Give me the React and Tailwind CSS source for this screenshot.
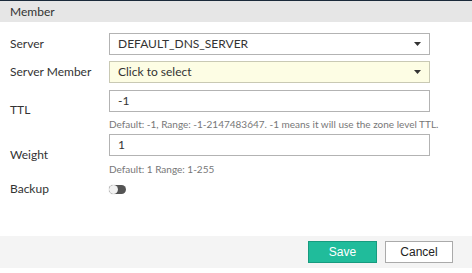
import React from "react";

function Caret() {
  return (
    <svg width="7" height="4" viewBox="0 0 7 4" className="shrink-0">
      <path d="M0 0 L7 0 L3.5 4 Z" fill="#333" />
    </svg>
  );
}

export default function App() {
  const font = { fontFamily: "Lato, 'Open Sans', sans-serif" };
  return (
    <div className="w-[472px] h-[273px] bg-white flex flex-col text-[#333]" style={font}>
      <div className="h-[22px] border-t border-[#1b2a3a] bg-[#e6e6e6] flex items-center pl-[10px] text-[12px] shrink-0">
        Member
      </div>
      <div className="flex flex-col pt-[11px] pl-[10px] pr-[42px] text-[12px]">
        <div className="flex items-center h-[22px]">
          <div className="w-[99px] shrink-0">Server</div>
          <div className="flex-1 min-w-0 h-[22px] border border-[#b3b3b3] bg-white flex items-center justify-between pl-[8px] pr-[8px]">
            <span>DEFAULT_DNS_SERVER</span>
            <Caret />
          </div>
        </div>
        <div className="flex items-center h-[22px] mt-[6px]">
          <div className="w-[99px] shrink-0">Server Member</div>
          <div className="flex-1 min-w-0 h-[22px] border border-[#c9c9b4] bg-[#fdfde4] flex items-center justify-between pl-[8px] pr-[8px]">
            <span>Click to select</span>
            <Caret />
          </div>
        </div>
        <div className="flex items-center mt-[7px]">
          <div className="w-[99px] shrink-0">TTL</div>
          <div className="flex-1 min-w-0 flex flex-col">
            <div className="h-[22px] border border-[#b3b3b3] flex items-center pl-[8px]">-1</div>
            <div className="text-[10px] text-[#777] mt-[6px] leading-[12px] whitespace-nowrap">
              Default: -1, Range: -1-2147483647. -1 means it will use the zone level TTL.
            </div>
          </div>
        </div>
        <div className="flex items-center mt-[4px]">
          <div className="w-[99px] shrink-0">Weight</div>
          <div className="flex-1 min-w-0 flex flex-col">
            <div className="h-[22px] border border-[#b3b3b3] flex items-center pl-[8px]">1</div>
            <div className="text-[10px] text-[#777] mt-[7px] leading-[12px]">Default: 1 Range: 1-255</div>
          </div>
        </div>
        <div className="flex items-center mt-[7px] h-[14px]">
          <div className="w-[99px] shrink-0">Backup</div>
          <div className="relative w-[17px] h-[9px] rounded-full bg-[#555]">
            <div className="absolute left-0 top-0 w-[9px] h-[9px] rounded-full bg-[#f2f2f2] shadow-[0_0_1px_rgba(0,0,0,0.4)]" />
          </div>
        </div>
      </div>
      <div className="flex-1" />
      <div className="h-[32px] bg-[#f4f4f4] flex items-center justify-end pr-[19px] gap-[8px] mb-[5px] shrink-0" style={{ fontFamily: "'Liberation Sans', Arial, sans-serif" }}>
        <button className="w-[69px] h-[22px] bg-[#20bc9b] border border-[#179b7f] text-white text-[12px] flex items-center justify-center">
          Save
        </button>
        <button className="w-[68px] h-[22px] bg-white border border-[#aaa] text-[#222] text-[12px] flex items-center justify-center">
          Cancel
        </button>
      </div>
    </div>
  );
}
